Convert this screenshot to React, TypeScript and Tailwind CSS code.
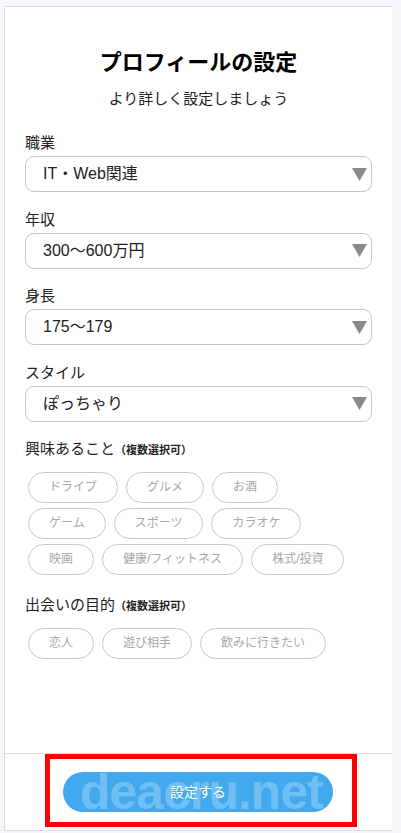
const font = '"Liberation Sans", "Noto Sans CJK JP", sans-serif';

type SelectProps = { label: string; value: string };

const SelectField = ({ label, value }: SelectProps) => (
  <div className="mt-[17.6px] first:mt-0">
    <div className="h-5 text-[15px] leading-5 text-[#222]">{label}</div>
    <div className="mt-[3px] flex h-9 items-center justify-between rounded-[9px] border border-[#c6c6c6] pl-[17px] pr-[4px]">
      <span className="text-[16px] text-[#222]">{value}</span>
      <svg width="15" height="13" viewBox="0 0 15 13">
        <path d="M0 0 H15 L7.5 13 Z" fill="#8a8a8a" />
      </svg>
    </div>
  </div>
);

const Chip = ({ text }: { text: string }) => (
  <div className="flex h-[31px] items-center rounded-full border border-[#c8c8c8] px-5 text-[12px] text-[#a8a8a8]">
    {text}
  </div>
);

const ChipGroup = ({ title, rows }: { title: string; rows: string[][] }) => (
  <div>
    <div className="flex h-5 items-baseline text-[#222]">
      <span className="text-[15px] leading-5">{title}</span>
      <span className="text-[11px] font-bold">（複数選択可）</span>
    </div>
    <div className="ml-[3px] mt-[13px] flex flex-col gap-[5px]">
      {rows.map((row, i) => (
        <div key={i} className="flex gap-2">
          {row.map(t => (
            <Chip key={t} text={t} />
          ))}
        </div>
      ))}
    </div>
  </div>
);

export default function App() {
  return (
    <div
      className="min-h-[833px] w-[401px] bg-[#f7f7fb] pl-[4px] pt-[6px]"
      style={{ fontFamily: font }}
    >
      <div className="flex h-[825px] w-[388px] flex-col border-b border-l border-t border-[#dcdce2] bg-white">
        <div className="flex-1 px-5 pt-[40px]">
          <h1 className="text-center text-[22px] font-bold leading-8 text-black">
            プロフィールの設定
          </h1>
          <p className="mt-[9px] text-center text-[15px] leading-[22px] text-[#222]">
            より詳しく設定しましょう
          </p>

          <div className="mt-[23px]">
            <SelectField label="職業" value="IT・Web関連" />
            <SelectField label="年収" value="300〜600万円" />
            <SelectField label="身長" value="175〜179" />
            <SelectField label="スタイル" value="ぽっちゃり" />
          </div>

          <div className="mt-[17px]">
            <ChipGroup
              title="興味あること"
              rows={[
                ['ドライブ', 'グルメ', 'お酒'],
                ['ゲーム', 'スポーツ', 'カラオケ'],
                ['映画', '健康/フィットネス', '株式/投資'],
              ]}
            />
          </div>

          <div className="mt-[20px]">
            <ChipGroup title="出会いの目的" rows={[['恋人', '遊び相手', '飲みに行きたい']]} />
          </div>
        </div>

        <div className="h-[77px] border-t border-[#dedee3] pl-[40px]">
          <div className="h-[73px] w-[312px] border-[5px] border-[#ff0000] pl-[13px] pt-[13px]">
            <button className="relative flex h-10 w-[270px] items-center justify-center overflow-hidden rounded-full bg-[#42a9ee] text-[14px] text-white">
              <span
                className="absolute left-[17px] top-[-17px] text-[50px] font-bold tracking-[-1px] text-white/25"
                style={{ fontFamily: '"Liberation Sans", Arial, sans-serif' }}
              >
                deacru.net
              </span>
              <span className="relative">設定する</span>
            </button>
          </div>
        </div>
      </div>
    </div>
  );
}
